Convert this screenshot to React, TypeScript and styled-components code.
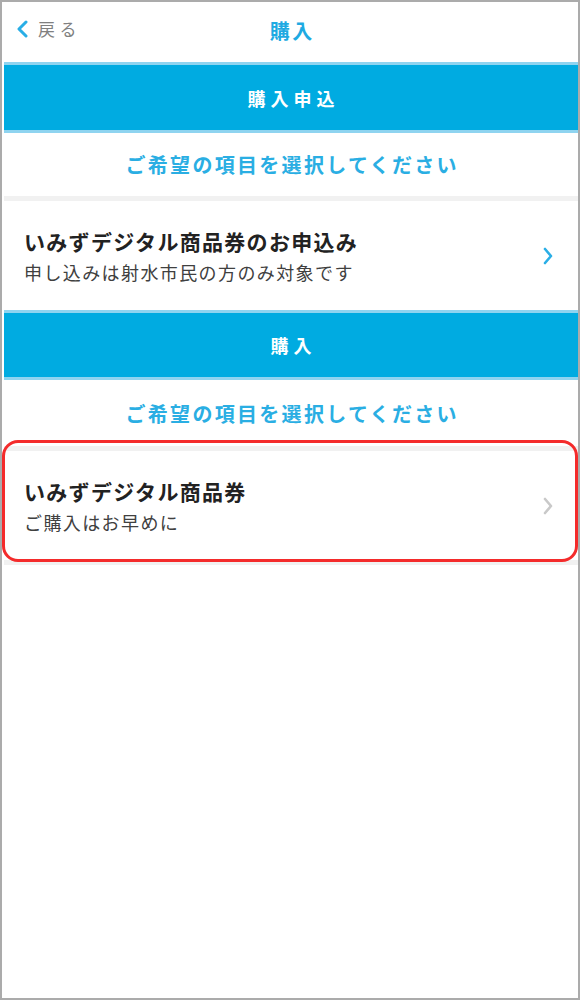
import styled, { createGlobalStyle } from "styled-components";

const GlobalStyle = createGlobalStyle`
  html, body {
    margin: 0;
    padding: 0;
    background: #ffffff;
  }
  body {
    font-family: "Noto Sans CJK JP", "Noto Sans", sans-serif;
  }
  * {
    box-sizing: border-box;
  }
`;

const Frame = styled.div`
  width: 580px;
  height: 1000px;
  border: 2px solid #ababab;
  background: #ffffff;
  display: flex;
  flex-direction: column;
  padding-left: 2px;
`;

const Header = styled.header`
  height: 60px;
  display: grid;
  grid-template-columns: 1fr auto 1fr;
  align-items: center;
  padding: 0 10px 4px;
`;

const BackBtn = styled.div`
  display: flex;
  align-items: center;
  gap: 9px;
  padding-left: 2px;
  font-size: 17px;
  letter-spacing: 4.5px;
  color: #808080;
  margin-top: -3px;
`;

const Title = styled.h1`
  margin: 0;
  font-size: 20px;
  font-weight: 700;
  letter-spacing: 2.5px;
  padding-left: 2.5px;
  color: #1eaae2;
`;

const Banner = styled.div<{ $height: number }>`
  height: ${(p) => p.$height}px;
  display: flex;
  align-items: center;
  justify-content: center;
  background: #00abe1;
  border-top: 3px solid #8fd4f0;
  border-bottom: 3px solid #8fd4f0;
  color: #ffffff;
  font-size: 18px;
  font-weight: 700;
  letter-spacing: 5px;
  padding-left: 5px;
`;

const Prompt = styled.div<{ $height: number }>`
  height: ${(p) => p.$height}px;
  display: flex;
  align-items: center;
  justify-content: center;
  color: #2aaee3;
  font-size: 20px;
  font-weight: 700;
  letter-spacing: 2.3px;
  padding-left: 2.3px;
`;

const Band = styled.div`
  height: 5px;
  background: #f1f1f1;
`;

const Item = styled.div`
  height: 109px;
  display: flex;
  align-items: center;
  justify-content: space-between;
  padding: 0 24px 0 20px;
  background: #ffffff;
`;

const ItemText = styled.div`
  display: flex;
  flex-direction: column;
  gap: 5px;
`;

const ItemTitle = styled.div`
  font-size: 21px;
  font-weight: 700;
  line-height: 28px;
  letter-spacing: 1.3px;
  color: #222222;
`;

const ItemSub = styled.div`
  font-size: 18px;
  line-height: 24px;
  letter-spacing: 1.4px;
  color: #404040;
`;

const Highlight = styled.div`
  position: relative;
  &::after {
    content: "";
    position: absolute;
    top: -6px;
    bottom: -2px;
    left: -2px;
    right: 0;
    border: 3.5px solid #f42b2b;
    border-radius: 16px;
    pointer-events: none;
  }
`;

function Chevron({ color }: { color: string }) {
  return (
    <svg width="12" height="18" viewBox="0 0 12 18">
      <polyline
        points="3,2 9,9 3,16"
        fill="none"
        stroke={color}
        strokeWidth="2.6"
        strokeLinecap="round"
        strokeLinejoin="round"
      />
    </svg>
  );
}

function BackIcon() {
  return (
    <svg width="13" height="18" viewBox="0 0 13 18">
      <polyline
        points="10,2 3,9 10,16"
        fill="none"
        stroke="#29aee6"
        strokeWidth="3"
        strokeLinecap="round"
        strokeLinejoin="round"
      />
    </svg>
  );
}

function App() {
  return (
    <Frame>
      <GlobalStyle />
      <Header>
        <BackBtn>
          <BackIcon />
          <span>戻る</span>
        </BackBtn>
        <Title>購入</Title>
        <div />
      </Header>

      <Banner $height={71}>購入申込</Banner>
      <Prompt $height={63}>ご希望の項目を選択してください</Prompt>
      <Band />
      <Item>
        <ItemText>
          <ItemTitle>いみずデジタル商品券のお申込み</ItemTitle>
          <ItemSub>申し込みは射水市民の方のみ対象です</ItemSub>
        </ItemText>
        <Chevron color="#2aaee6" />
      </Item>

      <Banner $height={70}>購入</Banner>
      <Prompt $height={66}>ご希望の項目を選択してください</Prompt>
      <Highlight>
        <Band />
        <Item>
          <ItemText>
            <ItemTitle>いみずデジタル商品券</ItemTitle>
            <ItemSub>ご購入はお早めに</ItemSub>
          </ItemText>
          <Chevron color="#c9c9c9" />
        </Item>
      </Highlight>
      <Band />
    </Frame>
  );
}

export default App;
